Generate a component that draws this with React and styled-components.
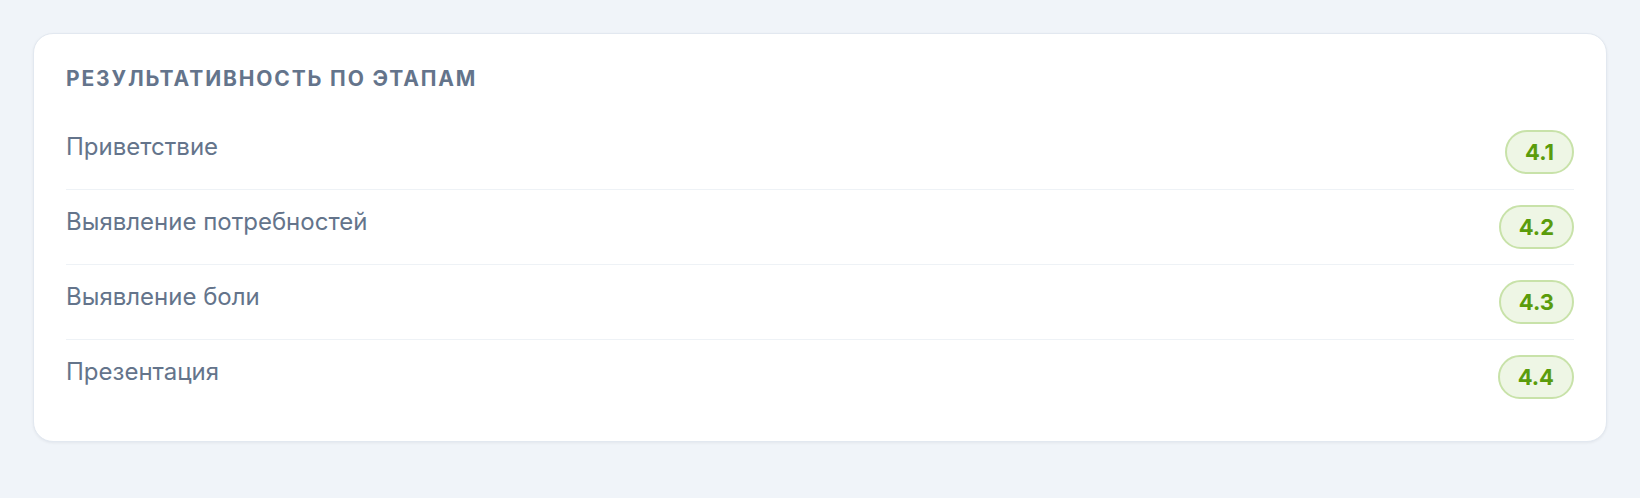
import React from "react";
import styled, { createGlobalStyle } from "styled-components";

const GlobalStyle = createGlobalStyle`
  html, body {
    margin: 0;
    padding: 0;
    background: #f0f4f9;
    font-family: Inter, "Noto Sans", "Liberation Sans", sans-serif;
  }
  * { box-sizing: border-box; }
`;

const Page = styled.div`
  padding: 33px;
  min-height: 498px;
  background: #f0f4f9;
`;

const Card = styled.section`
  background: #ffffff;
  border: 1px solid #e2e8f0;
  border-radius: 20px;
  box-shadow: 0 1px 3px rgba(15, 23, 42, 0.06);
  padding: 32px 32px 27px;
`;

const Title = styled.h2`
  margin: 0 0 23px;
  font-size: 21px;
  font-weight: 700;
  letter-spacing: 0.088em;
  text-transform: uppercase;
  color: #64748b;
  line-height: 26px;
`;

const List = styled.ul`
  list-style: none;
  margin: 0;
  padding: 0;
`;

const Row = styled.li`
  display: flex;
  align-items: flex-start;
  justify-content: space-between;
  padding: 15px 0;
  border-bottom: 1px solid #eef2f6;
  &:last-child {
    border-bottom: none;
  }
`;

const Label = styled.span`
  font-size: 24px;
  color: #64748b;
  line-height: 28px;
  padding-top: 3px;
`;

const Score = styled.span`
  display: inline-flex;
  align-items: center;
  justify-content: center;
  padding: 6px 18px;
  border: 2px solid #c8e2a9;
  background: #eef6e5;
  color: #5a9c0c;
  border-radius: 999px;
  font-size: 22px;
  font-weight: 700;
  line-height: 28px;
`;

const stages = [
  { name: "Приветствие", score: "4.1" },
  { name: "Выявление потребностей", score: "4.2" },
  { name: "Выявление боли", score: "4.3" },
  { name: "Презентация", score: "4.4" },
];

export default function App() {
  return (
    <>
      <GlobalStyle />
      <Page>
        <Card>
          <Title>Результативность по этапам</Title>
          <List>
            {stages.map((s) => (
              <Row key={s.name}>
                <Label>{s.name}</Label>
                <Score>{s.score}</Score>
              </Row>
            ))}
          </List>
        </Card>
      </Page>
    </>
  );
}
